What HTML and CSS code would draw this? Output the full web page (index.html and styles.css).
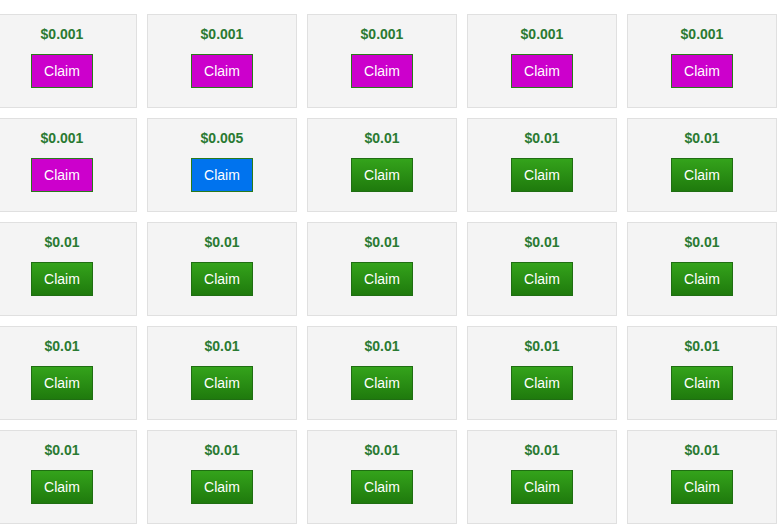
FILE: index.html
```html
<!DOCTYPE html>
<html lang="en">
  <head>
    <meta charset="UTF-8" />
    <meta name="viewport" content="width=device-width, initial-scale=1.0" />
    <title>Claim</title>
    <link rel="stylesheet" href="styles.css">
  </head>

  <body>
    <div class="grid">
      <div class="card"><p class="amount">$0.001</p><button class="claim pink">Claim</button></div>
      <div class="card"><p class="amount">$0.001</p><button class="claim pink">Claim</button></div>
      <div class="card"><p class="amount">$0.001</p><button class="claim pink">Claim</button></div>
      <div class="card"><p class="amount">$0.001</p><button class="claim pink">Claim</button></div>
      <div class="card"><p class="amount">$0.001</p><button class="claim pink">Claim</button></div>

      <div class="card"><p class="amount">$0.001</p><button class="claim pink">Claim</button></div>
      <div class="card"><p class="amount">$0.005</p><button class="claim blue">Claim</button></div>
      <div class="card"><p class="amount">$0.01</p><button class="claim">Claim</button></div>
      <div class="card"><p class="amount">$0.01</p><button class="claim">Claim</button></div>
      <div class="card"><p class="amount">$0.01</p><button class="claim">Claim</button></div>

      <div class="card"><p class="amount">$0.01</p><button class="claim">Claim</button></div>
      <div class="card"><p class="amount">$0.01</p><button class="claim">Claim</button></div>
      <div class="card"><p class="amount">$0.01</p><button class="claim">Claim</button></div>
      <div class="card"><p class="amount">$0.01</p><button class="claim">Claim</button></div>
      <div class="card"><p class="amount">$0.01</p><button class="claim">Claim</button></div>

      <div class="card"><p class="amount">$0.01</p><button class="claim">Claim</button></div>
      <div class="card"><p class="amount">$0.01</p><button class="claim">Claim</button></div>
      <div class="card"><p class="amount">$0.01</p><button class="claim">Claim</button></div>
      <div class="card"><p class="amount">$0.01</p><button class="claim">Claim</button></div>
      <div class="card"><p class="amount">$0.01</p><button class="claim">Claim</button></div>

      <div class="card"><p class="amount">$0.01</p><button class="claim">Claim</button></div>
      <div class="card"><p class="amount">$0.01</p><button class="claim">Claim</button></div>
      <div class="card"><p class="amount">$0.01</p><button class="claim">Claim</button></div>
      <div class="card"><p class="amount">$0.01</p><button class="claim">Claim</button></div>
      <div class="card"><p class="amount">$0.01</p><button class="claim">Claim</button></div>
    </div>
  </body>
</html>
```

FILE: styles.css
```css
html,
body {
  margin: 0;
  padding: 0;
  background: #fff;
  font-family: "Liberation Sans", Arial, sans-serif;
  overflow: hidden;
}

.grid {
  display: grid;
  grid-template-columns: repeat(5, 150px);
  grid-auto-rows: 94px;
  gap: 10px;
  padding-top: 14px;
  margin-left: -13px;
}

.card {
  box-sizing: border-box;
  background-color: #f4f4f4;
  border: 1px solid #e0e0e0;
  display: flex;
  flex-flow: column;
  align-items: center;
  padding-top: 11px;
}

.amount {
  margin: 0;
  font-size: 14px;
  line-height: 16px;
  font-weight: bold;
  color: #2a7a32;
}

button.claim {
  margin: 12px 0 0;
  padding: 0;
  box-sizing: border-box;
  width: 62px;
  height: 34px;
  border: 1px solid #1f6e12;
  font-family: inherit;
  font-size: 14px;
  color: #fff;
  background: linear-gradient(#34a31b, #1f7a0d);
  -webkit-appearance: none;
  appearance: none;
  cursor: pointer;
}

button.claim.pink {
  background: #cc00cc;
  border-color: #2a7a1a;
}

button.claim.blue {
  background: #0073ee;
  border-color: #2a7a1a;
}
```
